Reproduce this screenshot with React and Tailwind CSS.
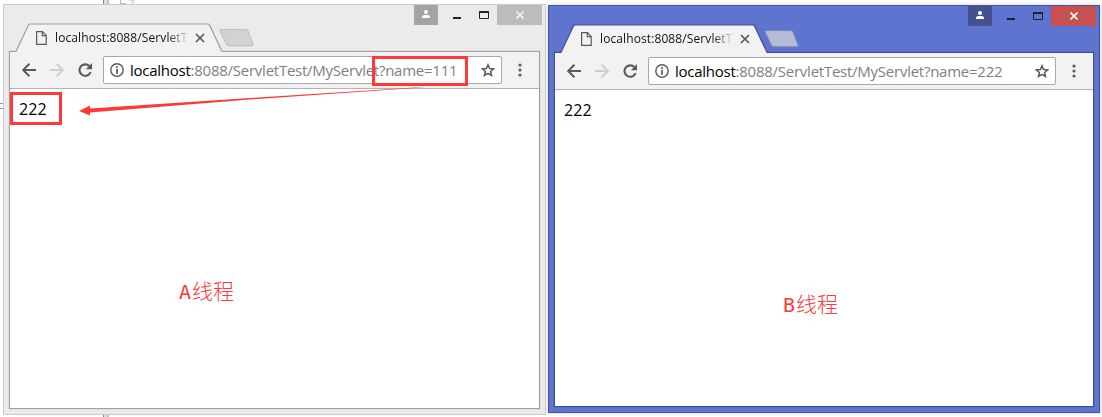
import React from "react";

const FileIcon = () => (
  <svg width="11" height="14" viewBox="0 0 11 14" fill="none" stroke="#5a5a5a" strokeWidth="1.2" className="block shrink-0">
    <path d="M.6.6h5.9l3.7 3.8v9H.6zM6.3.8v3.9h3.8" />
  </svg>
);

const CloseTab = () => (
  <svg width="10" height="10" viewBox="0 0 10 10" stroke="#5a5a5a" strokeWidth="1.7" className="block shrink-0">
    <path d="M1 1l8 8M9 1L1 9" />
  </svg>
);

const Arrow = ({ right }) => (
  <svg width="14" height="14" viewBox="0 0 14 14" fill="none" stroke={right ? "#cfcfcf" : "#5a5a5a"} strokeWidth="2" className="block shrink-0">
    {right ? <path d="M0 7h12.5M6.6.7L12.9 7l-6.3 6.3" /> : <path d="M14 7H1.5M7.4.7L1.1 7l6.3 6.3" />}
  </svg>
);

const Reload = () => (
  <svg width="14" height="14" viewBox="0 0 14 14" className="block shrink-0">
    <path d="M11.3 3.1A5.7 5.7 0 1 0 12.6 9" fill="none" stroke="#5a5a5a" strokeWidth="2.1" />
    <path d="M14 0v6.2H7.8z" fill="#5a5a5a" />
  </svg>
);

const Info = () => (
  <svg width="14" height="14" viewBox="0 0 14 14" className="block shrink-0">
    <circle cx="7" cy="7" r="6.2" fill="none" stroke="#5a5a5a" strokeWidth="1.4" />
    <path d="M6.1 3.3h1.8v1.6H6.1zM6.1 6h1.8v4.7H6.1z" fill="#5a5a5a" />
  </svg>
);

const Star = () => (
  <svg width="14" height="14" viewBox="0 0 14 14" fill="none" stroke="#5a5a5a" strokeWidth="1.5" className="block shrink-0">
    <path d="M7 1.7l1.6 3.8 4.1.3-3.1 2.7.9 4L7 10.4l-3.5 2.1.9-4-3.1-2.7 4.1-.3z" />
  </svg>
);

const Dots = () => (
  <svg width="4" height="14" viewBox="0 0 4 14" fill="#5a5a5a" className="block shrink-0">
    <circle cx="2" cy="2" r="1.6" />
    <circle cx="2" cy="7" r="1.6" />
    <circle cx="2" cy="12" r="1.6" />
  </svg>
);

const themes = {
  gray: {
    frame: "mt-1 ml-[3px] h-[411px] w-[543px] border-[#cbcbcb] bg-[#ebebeb] px-[5px] pb-[5px]",
    title: "-mr-[5px] pr-[3px]",
    body: "border-[#a0a0a0] shadow-[0_0_1px_#aaa]",
    user: "bg-[#a3a3a3]",
    close: "bg-[#bcbcbc] text-[#f4f4f4]",
    line: "#9c9c9c",
    plus: "#d2d2d2",
    plusLine: "#bdbdbd",
  },
  blue: {
    frame: "mt-[5px] ml-[2px] h-[408px] w-[552px] border-[#47559e] bg-[#5f74ce] px-[5px] pb-[5px] shadow-[0_0_4px_#ccc]",
    title: "-mr-[5px] pr-[3px]",
    body: "border-[#414e91] shadow-[0_0_1px_#414e91]",
    user: "bg-[#435190]",
    close: "bg-[#c75050] text-white",
    line: "#414e91",
    plus: "#b4bbd2",
    plusLine: "#7582bb",
  },
};

function BrowserWindow({ theme, query, children }) {
  const t = themes[theme];
  return (
    <section className={`relative flex shrink-0 flex-col border ${t.frame}`}>
      <header className={`flex h-[47px] shrink-0 justify-between ${t.title}`}>
        <div className="relative z-10 mt-[18px] flex h-[30px] items-start">
          <div className="relative h-[30px] w-[215px]">
            <svg width="215" height="30" viewBox="0 0 215 30" className="absolute inset-0">
              <path d="M1 28.5H7L19.5 2Q20 1 21 1H199Q200 1 200.5 2L213 28.5V30H1z" fill="#f2f2f2" />
              <path d="M0 28.5H7L19.5 2Q20 1 21 1H199Q200 1 200.5 2L213 28.5H215" fill="none" stroke={t.line} strokeWidth="1.2" />
            </svg>
            <div className="relative flex h-[29px] items-center pl-[27px]">
              <FileIcon />
              <span className="ml-2 w-[134px] overflow-hidden whitespace-nowrap bg-[linear-gradient(to_right,#111_112px,#eee_134px)] bg-clip-text text-[12px] leading-4 tracking-[0.1px] text-transparent">
                localhost:8088/ServletT
              </span>
              <span className="ml-[6px]"><CloseTab /></span>
            </div>
          </div>
          <svg width="35" height="18" viewBox="0 0 35 18" className="-ml-[5px] mt-[6px] block">
            <path d="M2 .6h25q1.500 0 2 1.200l5 13q.8 2-1 2H10q-1.800 0-2.500-1.500L1 2Q.4.6 2 .6z" fill={t.plus} stroke={t.plusLine} />
          </svg>
        </div>
        <div className="flex h-5">
          <div className={`flex h-5 w-6 justify-center pt-[5px] ${t.user}`}>
            <svg width="8" height="8" viewBox="0 0 8 8" fill="#fff">
              <circle cx="4" cy="2" r="2" />
              <path d="M0 8V6.800Q0 5 2.500 5h3Q8 5 8 6.800V8z" />
            </svg>
          </div>
          <svg width="59" height="20" viewBox="0 0 59 20" className="block">
            <path d="M15 12h8v2h-8z" fill="#222" />
            <path d="M41.500 7h9v6.500h-9z" fill="none" stroke="#222" />
            <path d="M41 6h10v2H41z" fill="#222" />
          </svg>
          <div className={`flex h-5 w-[45px] items-center justify-center ${t.close}`}>
            <svg width="8" height="8" viewBox="0 0 8 8" stroke="currentColor" strokeWidth="1.600">
              <path d="M.5.5l7 7M7.500.5l-7 7" />
            </svg>
          </div>
        </div>
      </header>
      <main className={`-mt-px flex min-h-0 flex-1 flex-col border bg-white ${t.body}`}>
        <div className="flex h-[37px] shrink-0 items-center border-b border-[#b4b4b4] bg-[#f2f2f2] pr-[17px] pl-3">
          <Arrow />
          <span className="ml-[14px]"><Arrow right /></span>
          <span className="ml-[14px]"><Reload /></span>
          <div className="ml-[11px] flex h-7 flex-1 items-center rounded-[2px] border border-[#a8a8a8] bg-white pr-[6px] pl-[6px]">
            <Info />
            <span className="ml-[6px] flex-1 whitespace-nowrap text-[15px] leading-5 tracking-[-0.25px] text-[#808080]">
              <span className="text-black">localhost</span>:8088/ServletTest/MyServlet?name={query}
            </span>
            <Star />
          </div>
          <span className="ml-[16px]"><Dots /></span>
        </div>
        <div className="pt-[9px] pl-[9px] text-[16px] leading-[22px] tracking-[0.15px] text-black">222</div>
        {children}
      </main>
    </section>
  );
}

export default function App() {
  return (
    <div className="relative flex h-[417px] w-[1102px] items-start overflow-hidden bg-white font-['Open_Sans','Noto_Sans_CJK_SC',sans-serif]">
      <svg width="150" height="417" className="absolute top-0 left-0" fill="none">
        <path d="M103.500 0v417M108 0v417" stroke="#888" />
        <path d="M105.500 0v417" stroke="#ddd" strokeWidth="3" />
        <path d="M120.500 0v3.500h5M129 0h4q2 3-2 4" stroke="#b8b8b8" />
        <path d="M0 103.500h4M0 108.500h4" stroke="#999" />
      </svg>
      <BrowserWindow theme="gray" query="111">
        <div className="mt-[156px] pl-[169px] font-['Noto_Sans_CJK_SC',sans-serif] text-[21px] leading-7 font-light text-[#ff3838]">
          <span className="mr-px font-['DejaVu_Sans_Mono'] text-[20px] font-normal">A</span>线程
        </div>
      </BrowserWindow>
      <BrowserWindow theme="blue" query="222">
        <div className="mt-[168px] pl-[228px] font-['Noto_Sans_CJK_SC',sans-serif] text-[21px] leading-7 font-light text-[#ff3838]">
          <span className="mr-px font-['DejaVu_Sans_Mono'] text-[20px] font-normal">B</span>线程
        </div>
      </BrowserWindow>
      <div className="absolute top-[92px] left-[10px] h-[33px] w-[52px] border-3 border-[#ff3838]" />
      <div className="absolute top-[56px] left-[372px] h-[30px] w-[96px] border-3 border-[#ff3838]" />
      <svg width="440" height="130" viewBox="0 0 440 130" className="absolute top-0 left-0">
        <path d="M79 111l11-5.500v3L250 98l165-10.500 10-.5-10 1L250 99.500 90 112.500v3z" fill="#ff3838" />
      </svg>
    </div>
  );
}
